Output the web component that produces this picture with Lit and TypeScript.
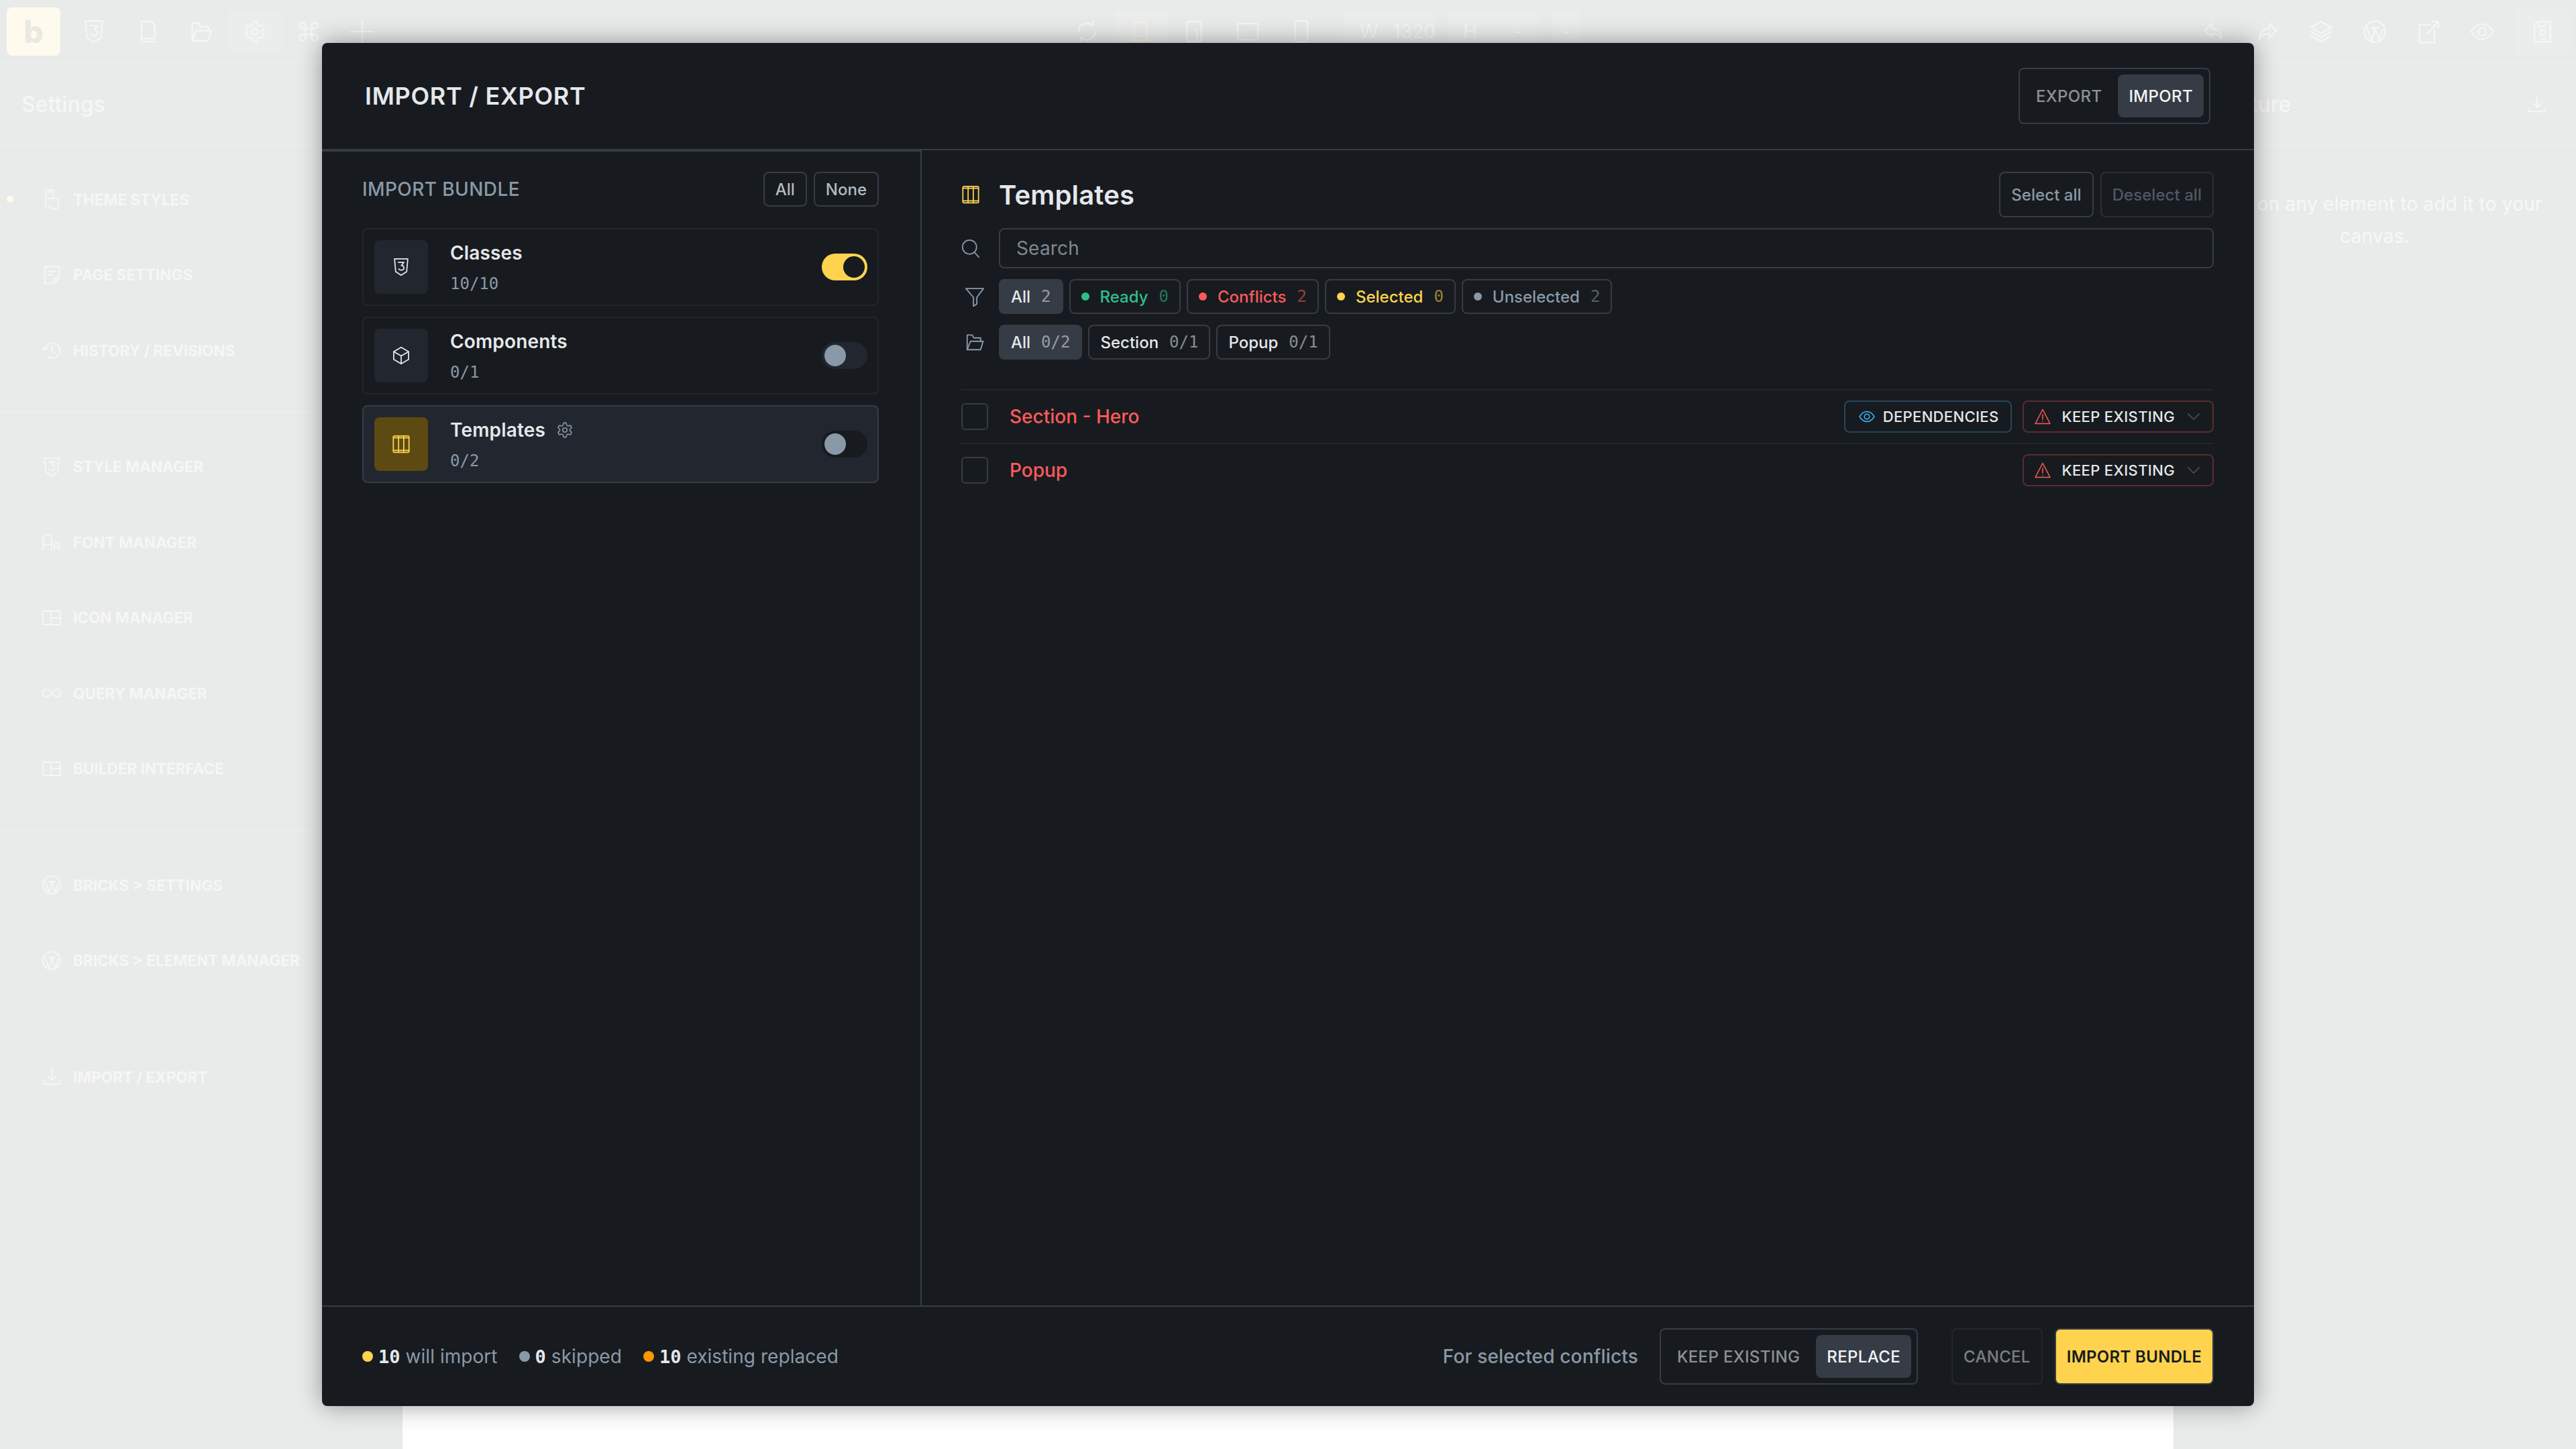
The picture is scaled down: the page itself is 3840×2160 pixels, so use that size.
import { LitElement, css, html, svg } from 'lit'
import { customElement } from 'lit/decorators.js'

const ico = (body: unknown, cls = '') =>
  html`<svg class="ico ${cls}" viewBox="0 0 24 24" fill="none" stroke="currentColor" stroke-width="1.5" stroke-linecap="round" stroke-linejoin="round">${body}</svg>`

const shield = svg`<path d="M3.500 1.500h17L19 18l-7 4.500L5 18z"/><path d="M8.500 6h7l-3.200 4.200c2 0 3.200 1.100 3.200 2.800 0 1.800-1.500 3-3.500 3-1.200 0-2.300-.5-3-1.400"/>`
const cube = svg`<path d="M12 1.500 21.500 7v10L12 22.500 2.500 17V7z"/><path d="M2.500 7 12 12.500 21.500 7M12 12.500v10"/>`
const columns = svg`<rect x="2" y="1.500" width="20" height="21" rx="1.500"/><path d="M8.700 1.500v21M15.300 1.500v21M2 4h20M2 20h20"/>`
const gear = svg`<path d="M12.220 2h-.44a2 2 0 0 0-2 2v.18a2 2 0 0 1-1 1.730l-.43.25a2 2 0 0 1-2 0l-.15-.08a2 2 0 0 0-2.730.73l-.22.38a2 2 0 0 0 .73 2.730l.15.1a2 2 0 0 1 1 1.720v.51a2 2 0 0 1-1 1.740l-.15.09a2 2 0 0 0-.73 2.730l.22.38a2 2 0 0 0 2.730.73l.15-.08a2 2 0 0 1 2 0l.43.25a2 2 0 0 1 1 1.730V20a2 2 0 0 0 2 2h.44a2 2 0 0 0 2-2v-.18a2 2 0 0 1 1-1.730l.43-.25a2 2 0 0 1 2 0l.15.08a2 2 0 0 0 2.730-.73l.22-.39a2 2 0 0 0-.73-2.730l-.15-.08a2 2 0 0 1-1-1.740v-.5a2 2 0 0 1 1-1.740l.15-.09a2 2 0 0 0 .73-2.730l-.22-.38a2 2 0 0 0-2.730-.73l-.15.08a2 2 0 0 1-2 0l-.43-.25a2 2 0 0 1-1-1.730V4a2 2 0 0 0-2-2z"/><circle cx="12" cy="12" r="3"/>`
const search = svg`<circle cx="10.500" cy="10.500" r="9"/><path d="m17 17.500 5.500 6"/>`
const funnel = svg`<path d="M1.500 2.500h21L14.500 13v8l-4 2.500V13z"/>`
const folder = svg`<path d="M3 21V3.500h6L11 7h8v4"/><path d="M3 21h16l3-10H7z"/>`
const eye = svg`<path d="M1 12c3-5 7-7.500 11-7.500S20 7 23 12c-3 5-7 7.500-11 7.500S4 17 1 12z"/><circle cx="12" cy="12" r="3.800"/>`
const alert = svg`<path d="M12 1.500 23 22.500H1z"/><path d="M12 9v7M12 19.300v.2"/>`
const chevron = svg`<path d="m2 7 10 10L22 7"/>`
const pages = svg`<path d="M6 19V2h10l3 3v14z"/><path d="M6 19v3h13"/>`
const plus = svg`<path d="M12 1v22M1 12h22"/>`
const cmd = svg`<path d="M9 9h6v6H9zM9 9H6a3 3 0 1 1 3-3zM15 9V6a3 3 0 1 1 3 3zM15 15h3a3 3 0 1 1-3 3zM9 15v3a3 3 0 1 1-3-3z"/>`
const refresh = svg`<path d="M4 12a8 8 0 0 1 13-6.500M20 12a8 8 0 0 1-13 6.500M15 6h3V2M9 18H6v4"/>`
const laptop = svg`<path d="M6 3h12v13H6zM6 16l-2.500 5h17L18 16"/>`
const tablet = svg`<rect x="5" y="2" width="14" height="20" rx="1.500"/><path d="M14 10c2 2 2 6 0 11"/>`
const tabletWide = svg`<rect x="2" y="4" width="20" height="16" rx="1"/><path d="M5 12v.3"/>`
const phone = svg`<rect x="6" y="1.500" width="12" height="21" rx="2"/><path d="M12 19v.3"/>`
const undo = svg`<path d="M10 4 3 11l7 7v-4c4 0 8 1 10 6 0-7-4-11-10-11z"/>`
const redo = svg`<path d="m14 4 7 7-7 7v-4c-4 0-8 1-10 6 0-7 4-11 10-11z"/>`
const layers = svg`<path d="M12 2 22 8l-10 6L2 8z"/><path d="m2 12 10 6 10-6M2 16l10 6 10-6"/>`
const wp = svg`<circle cx="12" cy="12" r="10.500"/><path d="m4 8 5 13 3-9-2-4M9 8h7M12 8l4.500 12.500L20 10"/>`
const external = svg`<path d="M14 5H3v18h15V11"/><path d="M11 14 22 2M16 2h6v6"/>`
const save = svg`<path d="M7 2h13v20H4V5zM8 2v5h7V2"/><circle cx="12" cy="13" r="2.500"/><path d="M10 19h5"/>`
const download = svg`<path d="M12 2v13M7 11l5 5 5-5M2 17v4h20v-4"/>`
const brush = svg`<path d="M5 1h9v10H5zM8 1v4M11 1v4"/><path d="M5 11v10M14 11h6v10a2 2 0 0 1-2 2h-6a3 3 0 0 1-3-3"/>`
const note = svg`<path d="M4 2h17v14l-6 6H4z"/><path d="M8 8h9M8 12h5M15 22v-6h6"/>`
const history = svg`<path d="M4 12a9 9 0 1 1 3 7M1 9l3 3 3-3M12 7v6l4 2"/>`
const fonts = svg`<path d="M2 21V8a5 5 0 0 1 10 0v13M2 15h10M15 21v-5a3 3 0 0 1 6 0v5M15 18h6"/>`
const layout = svg`<rect x="1.500" y="4" width="21" height="16" rx="1"/><path d="M11 4v16M11 12h11.500"/>`
const infinity = svg`<path d="M12 12c-2-3-4-4.500-6.500-4.500a4.500 4.500 0 0 0 0 9C8 16.500 10 15 12 12s4-4.500 6.500-4.500a4.500 4.500 0 0 1 0 9C16 16.500 14 15 12 12z"/>`

const sections = [
  [
    { label: 'Theme Styles', icon: brush, dot: true },
    { label: 'Page Settings', icon: note },
    { label: 'History / Revisions', icon: history },
  ],
  [
    { label: 'Style Manager', icon: shield },
    { label: 'Font Manager', icon: fonts },
    { label: 'Icon Manager', icon: layout },
    { label: 'Query Manager', icon: infinity },
    { label: 'Builder Interface', icon: layout },
  ],
  [
    { label: 'Bricks > Settings', icon: wp },
    { label: 'Bricks > Element Manager', icon: wp },
  ],
  [{ label: 'Import / Export', icon: download }],
]

const bundles = [
  { name: 'Classes', count: '10/10', icon: shield, on: true },
  { name: 'Components', count: '0/1', icon: cube },
  { name: 'Templates', count: '0/2', icon: columns, current: true },
]

const statusChips = [
  { label: 'All', count: '2', active: true },
  { label: 'Ready', count: '0', tone: 'green' },
  { label: 'Conflicts', count: '2', tone: 'red' },
  { label: 'Selected', count: '0', tone: 'yellow' },
  { label: 'Unselected', count: '2', tone: 'grey' },
]

const typeChips = [
  { label: 'All', count: '0/2', active: true },
  { label: 'Section', count: '0/1' },
  { label: 'Popup', count: '0/1' },
]

@customElement('app-root')
export class AppRoot extends LitElement {
  renderChip(c: { label: string; count: string; active?: boolean; tone?: string }) {
    return html`
      <span class="chip ${c.active ? 'active' : ''} ${c.tone ?? ''}">
        ${c.tone ? html`<i class="dot"></i>` : ''}
        <span>${c.label}</span>
        <span class="mono n">${c.count}</span>
      </span>
    `
  }

  renderBuilder() {
    return html`
      <div class="builder">
        <header class="topbar">
          <div class="top-left">
            <span class="logo">b</span>
            <span class="cell">${ico(shield)}</span>
            <span class="cell">${ico(pages)}</span>
            <span class="cell">${ico(folder)}</span>
            <span class="cell on">${ico(gear)}</span>
            <span class="cell">${ico(cmd)}</span>
            <span class="cell">${ico(plus)}</span>
          </div>
          <div class="top-mid">
            <span class="cell">${ico(refresh)}</span>
            <span class="cell on yellowish">${ico(laptop)}</span>
            <span class="cell">${ico(tablet)}</span>
            <span class="cell">${ico(tabletWide)}</span>
            <span class="cell">${ico(phone)}</span>
            <span class="dim w"><b>W</b><b>1320</b></span>
            <span class="dim h"><b>H</b><b>-</b></span>
            <span class="dim s"><b>-</b></span>
          </div>
          <div class="top-right">
            <span class="cell">${ico(undo)}</span>
            <span class="cell">${ico(redo)}</span>
            <span class="cell">${ico(layers)}</span>
            <span class="cell">${ico(wp)}</span>
            <span class="cell">${ico(external)}</span>
            <span class="cell">${ico(eye)}</span>
            <span class="cell on save">${ico(save)}</span>
          </div>
        </header>
        <div class="work">
          <aside class="side">
            <div class="side-title">Settings</div>
            ${sections.map(
              (group) => html`
                <div class="side-group">
                  ${group.map(
                    (item) => html`
                      <div class="side-row">
                        <i class="side-dot ${(item as { dot?: boolean }).dot ? 'show' : ''}"></i>
                        ${ico(item.icon)}
                        <span>${item.label}</span>
                      </div>
                    `
                  )}
                </div>
              `
            )}
          </aside>
          <div class="canvas"></div>
          <aside class="struct">
            <div class="struct-title"><span>Structure</span>${ico(download)}</div>
            <p>Click on any element to add it to your canvas.</p>
          </aside>
        </div>
      </div>
    `
  }

  renderModal() {
    return html`
      <section class="modal">
        <header class="m-head">
          <h1>IMPORT / EXPORT</h1>
          <div class="seg"><span>EXPORT</span><span class="active">IMPORT</span></div>
        </header>
        <div class="m-main">
          <div class="left">
            <div class="left-head">
              <h2>IMPORT BUNDLE</h2>
              <div class="mini"><span>All</span><span>None</span></div>
            </div>
            <div class="cards">
              ${bundles.map(
                (b) => html`
                  <div class="card ${b.current ? 'current' : ''}">
                    <span class="card-ico">${ico(b.icon)}</span>
                    <div class="card-text">
                      <div class="card-name">${b.name}${b.current ? ico(gear, 'cog') : ''}</div>
                      <div class="mono card-count">${b.count}</div>
                    </div>
                    <span class="toggle ${b.on ? 'on' : ''}"><i></i></span>
                  </div>
                `
              )}
            </div>
          </div>
          <div class="right">
            <div class="right-head">
              <span class="lead yellow-ico">${ico(columns)}</span>
              <h3>Templates</h3>
              <div class="sel">
                <span>Select all</span>
                <span class="off">Deselect all</span>
              </div>
            </div>
            <div class="line">
              <span class="lead">${ico(search)}</span>
              <div class="search">Search</div>
            </div>
            <div class="line">
              <span class="lead funnel">${ico(funnel)}</span>
              <div class="chips">${statusChips.map((c) => this.renderChip(c))}</div>
            </div>
            <div class="line">
              <span class="lead funnel">${ico(folder)}</span>
              <div class="chips">${typeChips.map((c) => this.renderChip(c))}</div>
            </div>
            <div class="list">
              <div class="row">
                <i class="check"></i>
                <span class="row-name">Section - Hero</span>
                <span class="pill dep">${ico(eye)}DEPENDENCIES</span>
                <span class="pill keep">${ico(alert)}KEEP EXISTING${ico(chevron, 'chev')}</span>
              </div>
              <div class="row">
                <i class="check"></i>
                <span class="row-name">Popup</span>
                <span class="pill keep">${ico(alert)}KEEP EXISTING${ico(chevron, 'chev')}</span>
              </div>
            </div>
          </div>
        </div>
        <footer class="m-foot">
          <div class="stats">
            <span class="stat"><i class="sd y"></i><b class="mono">10</b><span>will import</span></span>
            <span class="stat"><i class="sd g"></i><b class="mono">0</b><span>skipped</span></span>
            <span class="stat"><i class="sd o"></i><b class="mono">10</b><span>existing replaced</span></span>
          </div>
          <div class="actions">
            <span class="for">For selected conflicts</span>
            <div class="seg"><span>KEEP EXISTING</span><span class="active">REPLACE</span></div>
            <span class="btn cancel">CANCEL</span>
            <span class="btn go">IMPORT BUNDLE</span>
          </div>
        </footer>
      </section>
    `
  }

  render() {
    return html`${this.renderBuilder()}${this.renderModal()}`
  }

  static styles = css`
    :host {
      display: block;
      position: relative;
      width: 3840px;
      height: 2160px;
      overflow: hidden;
      font-family: Inter, 'Noto Sans', sans-serif;
      background: #e9ebea;
    }
    * { box-sizing: border-box; }
    .ico { width: 100%; height: 100%; display: block; }
    .mono { font-family: 'DejaVu Sans Mono', 'Liberation Mono', monospace; letter-spacing: 0; }
    h1, h2, h3, p { margin: 0; }

    /* washed out builder behind the dialog */
    .builder { display: flex; flex-direction: column; height: 100%; color: #f5f6f6; }
    .topbar { display: flex; align-items: center; height: 96px; border-bottom: 2px solid #ecedec; flex: none; }
    .top-left { display: flex; align-items: center; width: 1580px; padding-left: 10px; }
    .top-mid { display: flex; align-items: center; }
    .top-right { display: flex; align-items: center; margin-left: auto; padding-right: 10px; }
    .logo {
      width: 80px; height: 72px; margin-right: 10px; border-radius: 8px; background: #fffaee; color: #e9e9e3;
      display: flex; align-items: center; justify-content: center; font-size: 46px; font-weight: 800;
    }
    .cell { width: 80px; height: 64px; padding: 14px 22px; border-radius: 8px; }
    .cell.on { background: #ebecec; }
    .cell.yellowish { color: #f6f3e4; }
    .cell.save { height: 72px; padding: 18px 22px; margin-left: 10px; }
    .dim { display: flex; align-items: center; height: 64px; font-size: 28px; background: #ebecec; border-radius: 8px; }
    .dim b { font-weight: 400; }
    .dim.w { width: 137px; margin-left: 22px; padding-left: 25px; gap: 22px; }
    .dim.h { width: 134px; margin-left: 19px; padding-left: 23px; gap: 54px; }
    .dim.s { width: 42px; margin-left: 22px; padding-left: 14px; }

    .work { flex: 1; display: flex; min-height: 0; }
    .side { width: 600px; flex: none; }
    .side-title { height: 120px; padding-left: 32px; display: flex; align-items: center; font-size: 32px; font-weight: 500; border-bottom: 2px solid #ecedec; }
    .side-group { padding: 25px 0 34px; border-bottom: 2px solid #ecedec; }
    .side-group:last-child { border-bottom: 0; }
    .side-row { display: flex; align-items: center; height: 112.500px; padding-left: 10px; font-size: 22.500px; font-weight: 700; text-transform: uppercase; }
    .side-row .ico { width: 30px; height: 30px; flex: none; margin-right: 17px; }
    .side-dot { width: 10px; height: 10px; margin-right: 42px; border-radius: 50%; flex: none; }
    .side-dot.show { background: #fffbe8; }
    .canvas { flex: 1; background: #fff; }
    .struct { width: 600px; flex: none; }
    .struct-title { height: 120px; display: flex; align-items: center; justify-content: space-between; padding: 0 43px 0 33px; font-size: 32px; font-weight: 500; border-bottom: 2px solid #ecedec; }
    .struct-title .ico { width: 30px; height: 30px; }
    .struct p { padding: 64px 40px 0; text-align: center; font-size: 28px; line-height: 48px; letter-spacing: 0.2px; color: #f7f8f8; }

    /* dialog */
    .modal {
      position: absolute; left: 480px; top: 64px; width: 2880px; height: 2032px;
      display: flex; flex-direction: column; background: #171b1f; border-radius: 8px;
      box-shadow: 0 0 36px rgba(0, 0, 0, 0.38); color: #e5e7eb; letter-spacing: 0.01em;
    }
    .m-head { height: 160px; flex: none; display: flex; align-items: center; justify-content: space-between; padding: 0 65px 0 64px; border-bottom: 2px solid #363c46; }
    .m-head h1 { font-size: 36px; font-weight: 600; line-height: 1; letter-spacing: 0.7px; }
    .seg { display: flex; align-items: center; gap: 8px; height: 84px; padding: 8px; border: 2px solid #363c46; border-radius: 8px; font-size: 24px; font-weight: 500; color: #8d9194; letter-spacing: 0.35px; }
    .seg span { height: 64px; display: flex; align-items: center; padding: 0 16px; border-radius: 8px; }
    .seg .active { background: #363c46; color: #f3f4f6; }

    .m-main { flex: 1; display: flex; min-height: 0; }
    .left { width: 894px; flex: none; padding: 30px 62px 0 60px; border-top: 2px solid #363c46; border-right: 2px solid #363c46; }
    .left-head { display: flex; align-items: center; justify-content: space-between; height: 52px; margin-bottom: 32px; }
    .left-head h2 { font-size: 28px; font-weight: 500; color: #8a99a8; letter-spacing: 0.4px; }
    .mini { display: flex; gap: 10px; font-size: 24px; font-weight: 500; color: #b4bac2; letter-spacing: 0; }
    .mini span { height: 52px; display: flex; align-items: center; padding: 0 16px; border: 2px solid #363c46; border-radius: 8px; }
    .cards { display: flex; flex-direction: column; gap: 16px; }
    .card { display: flex; align-items: center; gap: 33px; height: 116px; padding: 0 15px 0 16px; border: 2px solid #22262e; border-radius: 8px; }
    .card.current { background: #22262e; border-color: #363c46; }
    .card-ico { width: 80px; height: 80px; flex: none; padding: 26px; border-radius: 8px; background: #22262e; color: #e5e7eb; }
    .card.current .card-ico { background: #5c4a12; color: #ffd34e; }
    .card-text { flex: 1; display: flex; flex-direction: column; gap: 15px; }
    .card-name { display: flex; align-items: center; gap: 16px; font-size: 28px; font-weight: 600; line-height: 34px; }
    .cog { width: 26px; height: 26px; color: #8a99a8; }
    .card-count { font-size: 24px; line-height: 28px; color: #8a99a8; }
    .toggle { width: 68px; height: 40px; border-radius: 20px; background: #22262e; padding: 4px; flex: none; }
    .card.current .toggle { background: #171b1f; }
    .toggle i { display: block; width: 32px; height: 32px; border-radius: 50%; background: #8a99a8; }
    .toggle.on { background: #ffd34e; padding-left: 32px; }
    .toggle.on i { background: #171b1f; }

    .right { flex: 1; min-width: 0; padding: 32px 60px 0 59px; display: flex; flex-direction: column; gap: 16px; }
    .right-head { display: flex; align-items: center; height: 68px; }
    .right-head h3 { flex: 1; font-size: 40px; font-weight: 600; }
    .lead { width: 56px; flex: none; display: flex; color: #8a99a8; }
    .lead .ico { width: 28px; height: 28px; }
    .yellow-ico { color: #ffd34e; }
    .sel { display: flex; gap: 10px; font-size: 24px; font-weight: 500; color: #8a99a8; letter-spacing: 0.05px; }
    .sel span { height: 68px; display: flex; align-items: center; padding: 0 16px; border: 2px solid #363c46; border-radius: 8px; }
    .sel .off { color: #4f5864; border-color: #2a2f37; }
    .line { display: flex; align-items: center; }
    .search { flex: 1; height: 60px; display: flex; align-items: center; padding: 0 24px; border: 2px solid #363c46; border-radius: 8px; font-size: 28px; color: #7f8791; }
    .chips { display: flex; gap: 9px; }
    .chip { height: 52px; display: flex; align-items: center; gap: 16px; padding: 0 16px; border: 2px solid #363c46; border-radius: 8px; font-size: 24px; font-weight: 500; color: #e5e7eb; letter-spacing: 0; }
    .chip.active { background: #363c46; }
    .chip .n { opacity: 0.55; font-weight: 400; }
    .chip .dot { width: 12px; height: 12px; border-radius: 50%; background: currentColor; }
    .chip.green { color: #2fbf8a; }
    .chip.red { color: #ff5a5a; }
    .chip.yellow { color: #ffd34e; }
    .chip.grey { color: #8a99a8; }
    .funnel .ico { width: 30px; height: 30px; margin-left: 5px; }

    .list { margin-top: 28px; }
    .row { height: 80px; display: flex; align-items: center; gap: 16px; border-top: 2px solid #22262e; }
    .check { width: 40px; height: 40px; flex: none; margin-right: 16px; border: 2px solid #363c46; border-radius: 6px; }
    .row-name { flex: 1; font-size: 28px; font-weight: 500; color: #ff5a5a; letter-spacing: 0; }
    .pill { height: 48px; display: flex; align-items: center; border: 2px solid; border-radius: 8px; font-size: 22px; font-weight: 500; color: #e5e7eb; letter-spacing: 0.35px; }
    .pill > .ico { width: 24px; height: 24px; flex: none; }
    .dep { gap: 12px; padding: 0 18px 0 20px; border-color: #24465f; }
    .dep > .ico { color: #38b6ff; }
    .keep { gap: 16px; padding: 0 18px 0 16px; border-color: #5a2b2f; }
    .keep > .ico { color: #ff5a5a; }
    .keep > .chev { width: 20px; height: 20px; margin-left: 2px; color: #5b6570; }

    .m-foot { height: 150px; flex: none; display: flex; align-items: center; justify-content: space-between; padding: 0 60px; border-top: 2px solid #363c46; }
    .stats { display: flex; gap: 32px; font-size: 28px; color: #8a99a8; letter-spacing: 0.05px; }
    .stat { display: flex; align-items: center; gap: 8px; }
    .stat b { color: #e5e7eb; font-size: 27px; font-weight: 700; }
    .sd { width: 16px; height: 16px; border-radius: 50%; }
    .sd.y { background: #ffd34e; }
    .sd.g { background: #8a99a8; }
    .sd.o { background: #ff9500; }
    .actions { display: flex; align-items: center; }
    .for { font-size: 28px; font-weight: 500; color: #8a99a8; margin-right: 32px; }
    .btn { height: 84px; display: flex; align-items: center; padding: 0 16px; border: 2px solid #22262e; border-radius: 8px; font-size: 24px; font-weight: 500; letter-spacing: 0.3px; }
    .cancel { margin-left: 50px; color: #7a7f85; }
    .go { margin-left: 18px; background: #ffd34e; color: #171b1f; font-weight: 600; border-color: #363c46; }
  `
}

declare global {
  interface HTMLElementTagNameMap {
    'app-root': AppRoot
  }
}
